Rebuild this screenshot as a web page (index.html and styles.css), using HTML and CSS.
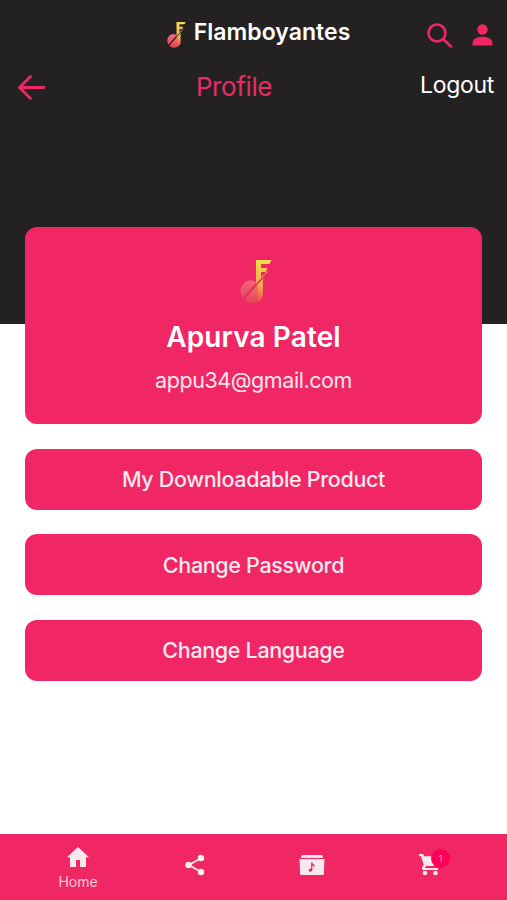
FILE: index.html
```html
<!DOCTYPE html>
<html lang="en">
<head>
    <meta charset="UTF-8">
    <meta name="viewport" content="width=device-width, initial-scale=1.0">
    <title>Flamboyantes - Profile</title>
    <link rel="stylesheet" href="styles.css">
</head>
<body>
    <svg class="defs" width="0" height="0">
        <defs>
            <linearGradient id="gold" gradientUnits="userSpaceOnUse" x1="20" y1="0" x2="16" y2="44">
                <stop offset="0" stop-color="#f5e04e"/>
                <stop offset="0.6" stop-color="#f3a44c"/>
                <stop offset="1" stop-color="#ea4152"/>
            </linearGradient>
            <linearGradient id="rose" gradientUnits="userSpaceOnUse" x1="10" y1="20" x2="10" y2="43">
                <stop offset="0" stop-color="#f4667a"/>
                <stop offset="1" stop-color="#e2405a"/>
            </linearGradient>
            <symbol id="logo" viewBox="0 0 32 44">
                <path fill="url(#gold)" d="M16 0h15.500l-2 4h-8.500v4h6.500l-2 4h-4.500v5l7-6-5 8v15c0 5.500-5 9-11 9-3 0-5.500-1-7.500-3L16 26z"/>
                <path fill="url(#rose)" d="M3 38C-1.500 33 0 25 6 21.500c3-1.500 7-1.500 10.500 1z"/>
                <path fill="url(#rose)" d="M4.500 40 18 24.500V42c-4 2-10 2-13.500-2z" opacity="0.700"/>
                <path class="slash" stroke-width="1.500" d="M3.500 39 26 14"/>
            </symbol>
        </defs>
    </svg>
    <header class="header">
        <div class="top-bar">
            <div class="brand">
                <svg class="brand-logo"><use href="#logo"/></svg>
                <span class="brand-name">Flamboyantes</span>
            </div>
            <div class="top-icons">
                <svg width="26" height="26" viewBox="0 0 26 26" fill="none" stroke="#f02665" stroke-width="2.600" stroke-linecap="round">
                    <circle cx="10" cy="9" r="8.500"/>
                    <path d="M16.500 15.500l7.500 7"/>
                </svg>
                <svg width="20" height="22" viewBox="0 0 20 22" fill="#f02665">
                    <circle cx="9.500" cy="5.500" r="5.200"/>
                    <path d="M-.5 21.500v-2.500C-.5 15 4 12.700 9.500 12.700S19.500 15 19.500 19v2.500z"/>
                </svg>
            </div>
        </div>
        <div class="title-bar">
            <svg width="28" height="26" viewBox="0 0 28 26" fill="none" stroke="#f02665" stroke-width="2.800" stroke-linecap="round" stroke-linejoin="round">
                <path d="M26 13.500H1.500M12.500 2.500 1.500 13.500 12.500 24.500"/>
            </svg>
            <h1 class="title">Profile</h1>
            <a class="logout">Logout</a>
        </div>
    </header>
    <main class="content">
        <section class="card">
            <svg class="card-logo"><use href="#logo"/></svg>
            <h2 class="name">Apurva Patel</h2>
            <p class="email">appu34@gmail.com</p>
        </section>
        <button class="option">My Downloadable Product</button>
        <button class="option">Change Password</button>
        <button class="option">Change Language</button>
    </main>
    <nav class="tabs">
        <a class="tab">
            <svg width="22" height="20" viewBox="0 0 22 20" fill="#f8e9ef">
                <path d="M11 0 0 10.200h3V20h6v-7h4v7h6v-9.800h3z"/>
            </svg>
            <span class="tab-label">Home</span>
        </a>
        <a class="tab">
            <svg width="20" height="22" viewBox="0 0 20 22" fill="#fdeef3">
                <path d="M16 4 4 11l12 7" fill="none" stroke="#fdeef3" stroke-width="1.600"/>
                <circle cx="16" cy="4" r="3.200"/>
                <circle cx="3.500" cy="11" r="3.200"/>
                <circle cx="16" cy="18" r="3.200"/>
            </svg>
        </a>
        <a class="tab">
            <svg width="26" height="20" viewBox="0 0 26 20" fill="#f8e9ef">
                <path d="M3.500 0h19q1.200 0 1.200 1.200V3H2.300V1.200Q2.300 0 3.500 0z"/>
                <path d="M.5 4h25L24.800 19q0 1-1 1H2.200q-1 0-1-1z"/>
                <path fill="#e62b62" d="M12.200 7.200h1c.2 2 3.200 2.200 2.600 5.500-.5-1.400-1.200-1.900-2.400-2.100v4.200c0 1.200-1 2-2 2s-1.700-.6-1.700-1.500c0-1.200 1.300-2 2.500-1.700z"/>
            </svg>
        </a>
        <a class="tab">
            <span class="cart">
                <svg width="20" height="22" viewBox="0 0 20 22" fill="#f8e9ef">
                    <path d="M0 0h4l1.200 2.300H19v2L15.500 12H7l-1 2h13v2H4.500c-1.500 0-2-1.500-1.300-2.700l1.500-2.600L2 2.300H0z"/>
                    <circle cx="6" cy="19" r="2.300"/>
                    <circle cx="16.500" cy="19" r="2.300"/>
                </svg>
                <span class="badge">1</span>
            </span>
        </a>
    </nav>
</body>
</html>
```

FILE: styles.css
```css
* {
    box-sizing: border-box;
}
body {
    margin: 0;
    height: 900px;
    display: flex;
    flex-direction: column;
    font-family: Inter, "Liberation Sans", sans-serif;
    background-color: #fff;
    overflow: hidden;
}
h1, h2, p {
    margin: 0;
}
svg {
    display: block;
    flex-shrink: 0;
    overflow: visible;
}
.defs {
    position: absolute;
}
.slash {
    stroke: var(--slash);
}
.header {
    height: 324px;
    flex-shrink: 0;
    background-color: #242122;
}
.top-bar {
    display: grid;
    grid-template-columns: 1fr auto 1fr;
    height: 66px;
    padding: 0 14px 0 24px;
}
.brand {
    grid-column: 2;
    display: flex;
    align-items: flex-start;
    gap: 8px;
    padding-top: 18px;
}
.brand-logo {
    --slash: #242122;
    width: 19px;
    height: 26px;
    margin-top: 4px;
}
.brand-name {
    color: #fff;
    font-size: 23px;
    font-weight: 600;
    line-height: 28px;
    letter-spacing: 0.05px;
}
.top-icons {
    display: flex;
    justify-content: flex-end;
    align-items: flex-start;
    gap: 20px;
    padding-top: 24px;
}
.title-bar {
    display: flex;
    justify-content: space-between;
    align-items: center;
    height: 42px;
    padding: 0 13px 0 18px;
}
.title {
    margin-left: 2px;
    color: #e92c66;
    font-size: 26px;
    font-weight: 400;
    line-height: 32px;
    letter-spacing: -0.4px;
}
.logout {
    margin-top: -4px;
    color: #fff;
    font-size: 23px;
    line-height: 28px;
    letter-spacing: -0.3px;
}
.content {
    flex: 1;
    display: flex;
    flex-direction: column;
    gap: 24.5px;
    margin-top: -97px;
    padding: 0 25px;
}
.card {
    display: flex;
    flex-direction: column;
    align-items: center;
    height: 197px;
    padding-top: 33px;
    background-color: #f02665;
    border-radius: 12px;
    color: #fff;
}
.card-logo {
    --slash: #e62e5c;
    width: 32px;
    height: 44px;
    margin-left: 4px;
}
.name {
    margin-top: 15px;
    font-size: 28px;
    font-weight: 600;
    line-height: 36px;
    letter-spacing: 0.1px;
}
.email {
    margin-top: 11px;
    font-size: 21.5px;
    line-height: 28px;
    letter-spacing: -0.43px;
    color: #fde6ee;
}
.option {
    height: 61px;
    padding: 0;
    background-color: #f02665;
    border: none;
    border-radius: 12px;
    color: #fdeaf0;
    font-family: inherit;
    font-size: 21.5px;
    font-weight: 500;
    letter-spacing: -0.33px;
    cursor: pointer;
}
.tabs {
    display: grid;
    grid-template-columns: repeat(4, 117px);
    justify-content: center;
    height: 66px;
    flex-shrink: 0;
    padding-bottom: 4px;
    background-color: #f02665;
}
.tab {
    display: flex;
    flex-direction: column;
    align-items: center;
    justify-content: center;
}
.tab-label {
    margin: 6px 0 -6px;
    color: #f9c9d8;
    font-size: 14px;
    line-height: 17px;
}
.cart {
    position: relative;
}
.badge {
    position: absolute;
    top: -5px;
    left: 12px;
    width: 19px;
    height: 19px;
    border-radius: 50%;
    background-color: #ff0057;
    color: #fbb5cb;
    font-size: 9px;
    line-height: 19px;
    text-align: center;
}
```
